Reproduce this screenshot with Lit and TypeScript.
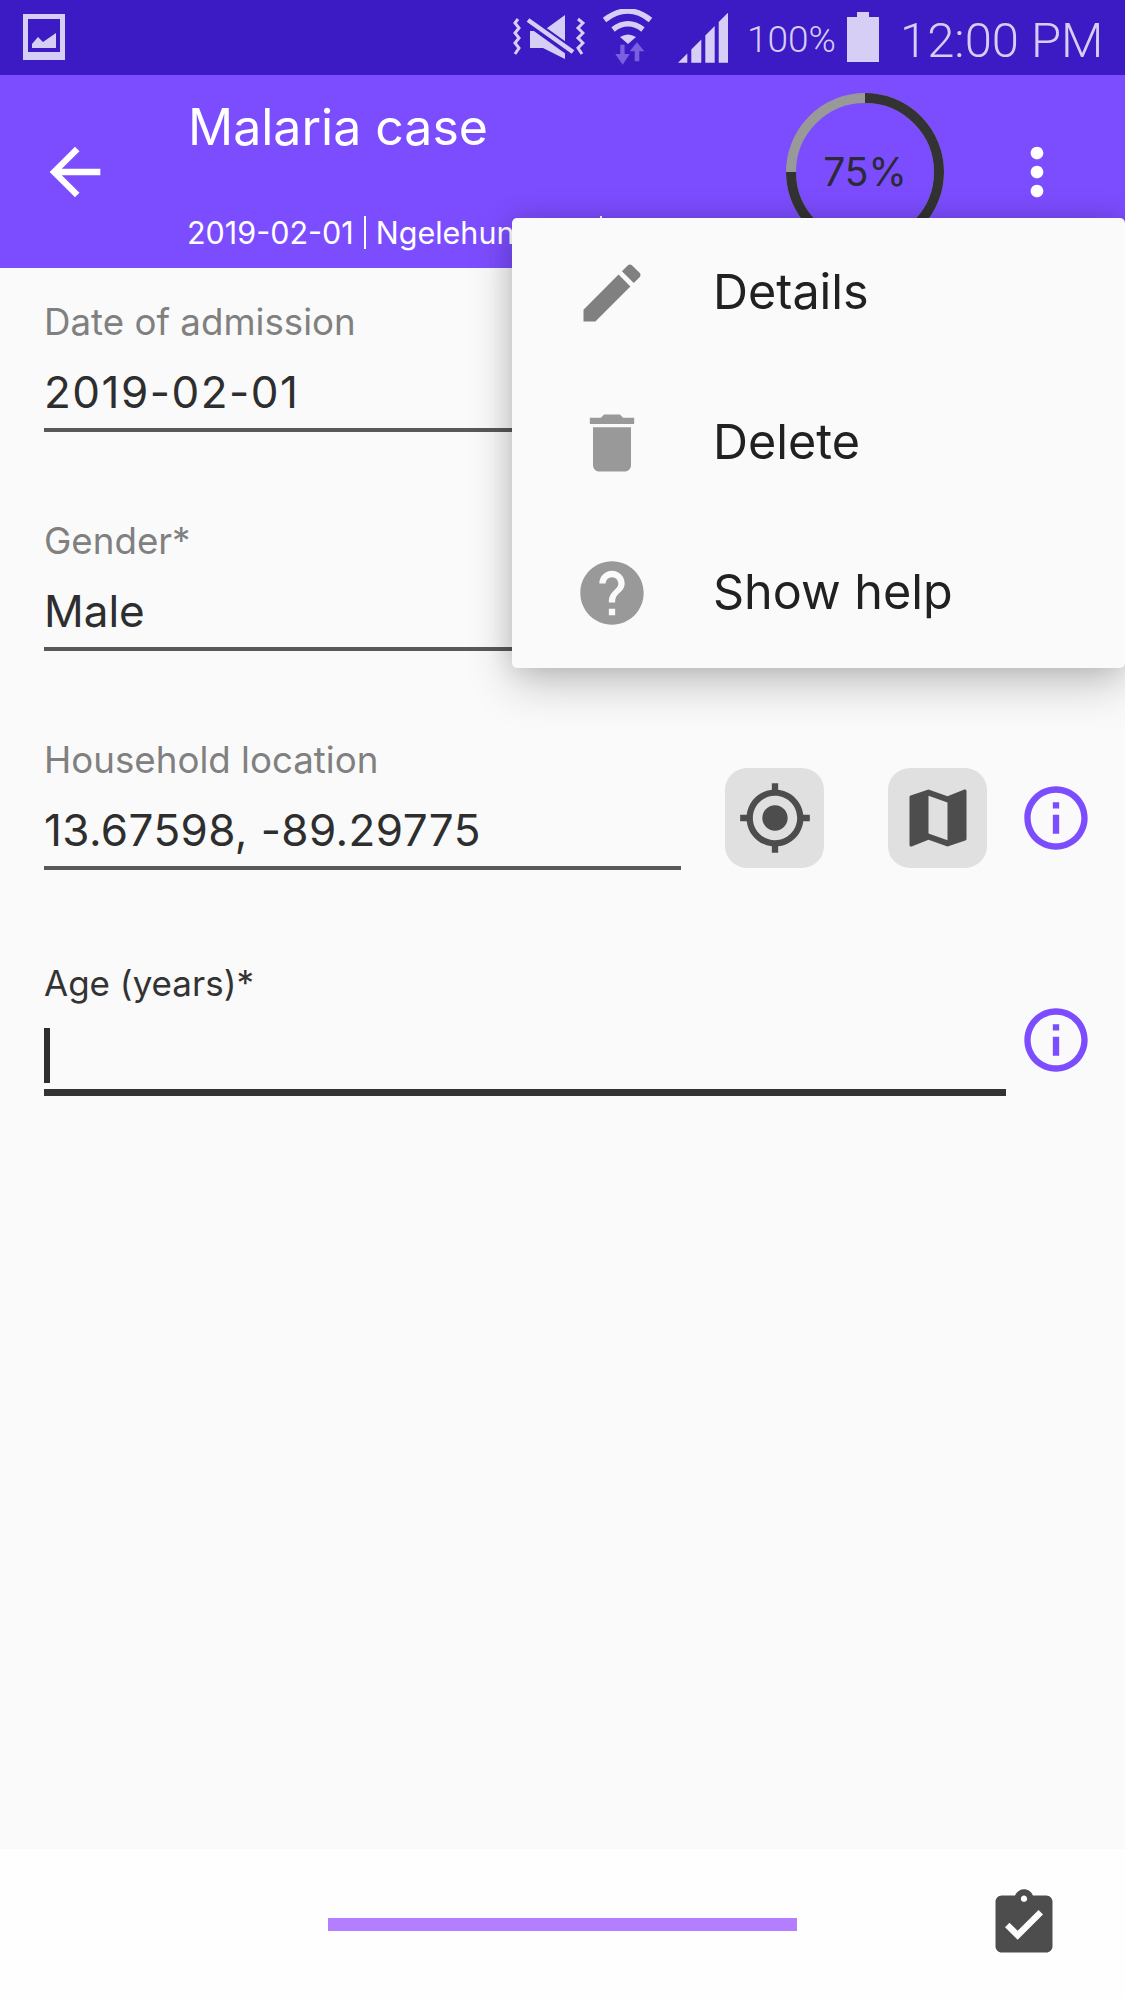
import { html, css, svg, LitElement } from 'lit';
import { customElement } from 'lit/decorators.js';

const ICONS = {
  back: 'M20 11H7.83l5.59-5.59L12 4l-8 8 8 8 1.41-1.41L7.83 13H20v-2z',
  more: 'M12 8c1.1 0 2-.9 2-2s-.9-2-2-2-2 .9-2 2 .9 2 2 2zm0 2c-1.1 0-2 .9-2 2s.9 2 2 2 2-.9 2-2-.9-2-2-2zm0 6c-1.1 0-2 .9-2 2s.9 2 2 2 2-.9 2-2-.9-2-2-2z',
  edit: 'M3 17.25V21h3.75L17.81 9.94l-3.75-3.75L3 17.25zM20.71 7.04c.39-.39.39-1.02 0-1.41l-2.34-2.34c-.39-.39-1.02-.39-1.41 0l-1.83 1.83 3.75 3.75 1.83-1.83z',
  trash: 'M6 19c0 1.1.9 2 2 2h8c1.1 0 2-.9 2-2V7H6v12zM19 4h-3.5l-1-1h-5l-1 1H5v2h14V4z',
  help: 'M12 2C6.48 2 2 6.48 2 12s4.48 10 10 10 10-4.48 10-10S17.52 2 12 2zm1 17h-2v-2h2v2zm2.07-7.75l-.9.92C13.45 12.9 13 13.5 13 15h-2v-.5c0-1.1.45-2.1 1.17-2.83l1.24-1.26c.37-.36.59-.86.59-1.41 0-1.1-.9-2-2-2s-2 .9-2 2H8c0-2.21 1.79-4 4-4s4 1.79 4 4c0 .88-.36 1.68-.93 2.25z',
  gps: 'M12 8c-2.21 0-4 1.79-4 4s1.79 4 4 4 4-1.79 4-4-1.79-4-4-4zm8.94 3c-.46-4.17-3.77-7.48-7.94-7.94V1h-2v2.06C6.83 3.52 3.52 6.83 3.06 11H1v2h2.06c.46 4.17 3.77 7.48 7.94 7.94V23h2v-2.06c4.17-.46 7.48-3.77 7.94-7.94H23v-2h-2.06zM12 19c-3.87 0-7-3.13-7-7s3.13-7 7-7 7 3.13 7 7-3.13 7-7 7z',
  map: 'M20.5 3l-.16.03L15 5.1 9 3 3.36 4.9c-.21.07-.36.25-.36.48V20.5c0 .28.22.5.5.5l.16-.03L9 18.9l6 2.1 5.64-1.9c.21-.07.36-.25.36-.48V3.5c0-.28-.22-.5-.5-.5zM15 19l-6-2.11V5l6 2.11V19z',
  info: 'M11 17h2v-6h-2v6zm1-15C6.48 2 2 6.48 2 12s4.48 10 10 10 10-4.48 10-10S17.52 2 12 2zm0 18c-4.41 0-8-3.59-8-8s3.59-8 8-8 8 3.59 8 8-3.59 8-8 8zM11 9h2V7h-2v2z',
  complete: 'M19 3h-4.18C14.4 1.84 13.3 1 12 1c-1.3 0-2.4.84-2.82 2H5c-1.1 0-2 .9-2 2v14c0 1.1.9 2 2 2h14c1.1 0 2-.9 2-2V5c0-1.1-.9-2-2-2zm-7 0c.55 0 1 .45 1 1s-.45 1-1 1-1-.45-1-1 .45-1 1-1zm-2 14l-4-4 1.41-1.41L10 14.17l6.59-6.59L18 9l-8 8z',
};

const icon = (name: keyof typeof ICONS, cls = '') =>
  html`<svg class="icon ${cls}" viewBox="0 0 24 24"><path d=${ICONS[name]}></path></svg>`;

const signalBars = [
  [0, 9.3],
  [13.3, 23.3],
  [27.3, 36.7],
  [40.7, 50],
];

@customElement('app-root')
export class AppRoot extends LitElement {
  static styles = css`
    :host {
      display: flex;
      flex-direction: column;
      position: relative;
      width: 1125px;
      height: 1999px;
      overflow: hidden;
      background: #fafafa;
      font-family: Inter, Roboto, sans-serif;
      color: #2e2e2e;
    }
    .icon {
      display: block;
      flex: none;
      width: 76px;
      height: 76px;
      fill: currentColor;
    }

    .status {
      display: flex;
      align-items: flex-start;
      flex: none;
      height: 75px;
      background: #3d1bc4;
      color: #d6cef5;
      font-family: Roboto, sans-serif;
    }
    .status svg {
      display: block;
      flex: none;
      fill: currentColor;
    }
    .s-image {
      margin: 14px 0 0 23px;
    }
    .s-mute {
      margin: 13px 0 0 448px;
    }
    .s-wifi {
      margin: 9px 0 0 17px;
    }
    .s-signal {
      margin: 13px 0 0 25px;
    }
    .s-pct {
      width: 100px;
      margin: 21px 0 0 19px;
      font-size: 37px;
      font-weight: 300;
      line-height: 37px;
    }
    .s-battery {
      margin-top: 12px;
    }
    .s-time {
      margin: 16px 0 0 21px;
      font-size: 49px;
      font-weight: 300;
      line-height: 49px;
      white-space: nowrap;
    }

    .bar {
      display: flex;
      align-items: center;
      flex: none;
      height: 193px;
      padding: 0 50px 0 37px;
      box-sizing: border-box;
      background: #7c4dff;
      color: #fff;
    }
    .titles {
      flex: 1;
      align-self: stretch;
      min-width: 0;
      margin-left: 74px;
      padding-top: 22px;
      white-space: nowrap;
    }
    .title {
      margin-left: 1px;
      font-size: 50px;
      line-height: 60px;
    }
    .sub {
      display: flex;
      margin-top: 56px;
      font-size: 30.5px;
      line-height: 40px;
    }
    .sub i {
      width: 2px;
      height: 33px;
      margin: 3px 10px 0;
      background: #fff;
    }
    .ring {
      display: grid;
      place-items: center;
      flex: none;
      width: 158px;
      height: 158px;
      margin-right: 55px;
      color: #2b2a36;
      font-size: 39px;
    }
    .ring > * {
      grid-area: 1 / 1;
    }

    .form {
      flex: 1;
      padding-top: 32px;
    }
    .row {
      display: flex;
      padding: 0 31px 0 44px;
      margin-bottom: 87px;
    }
    .field {
      flex: 1;
      min-width: 0;
    }
    .label {
      height: 44px;
      color: #808080;
      font-size: 36.7px;
      line-height: 43px;
    }
    .value {
      height: 56px;
      margin-top: 21px;
      font-size: 44px;
      line-height: 54px;
      padding-bottom: 7px;
      border-bottom: 4px solid #595959;
    }
    .date {
      letter-spacing: 1.5px;
    }
    .coords {
      letter-spacing: 0.4px;
    }
    .actions {
      display: flex;
      align-items: center;
      align-self: flex-end;
      flex: none;
      height: 100px;
      margin: 0 0 2px 44px;
    }
    .btn {
      display: flex;
      align-items: center;
      justify-content: center;
      width: 99px;
      height: 100px;
      margin-right: 64px;
      border-radius: 22px;
      background: #e0e0e0;
      color: #4d4d4d;
    }
    .btn + .btn {
      margin-right: 31px;
    }
    .purple {
      color: #7c4dff;
    }
    .focused {
      padding-top: 5px;
      margin-bottom: 0;
    }
    .focused .label {
      color: #333;
      font-size: 35px;
    }
    .input {
      height: 61px;
      margin-top: 22px;
      border-bottom: 7px solid #333;
    }
    .caret {
      width: 6px;
      height: 55px;
      background: #2e2e2e;
    }
    .focused .purple {
      align-self: flex-end;
      margin: 0 0 18px 12px;
    }

    .footer {
      display: flex;
      align-items: center;
      flex: none;
      height: 150px;
      padding: 0 63px 0 328px;
      background: #fefefe;
      color: #4d4d4d;
    }
    .progress {
      width: 469px;
      height: 13px;
      margin-right: auto;
      background: #b37eff;
    }

    .menu {
      position: absolute;
      top: 218px;
      right: 0;
      width: 613px;
      border-radius: 5px;
      background: #fafafa;
      box-shadow: 0 16px 46px rgba(0, 0, 0, 0.22), 0 0 26px rgba(0, 0, 0, 0.12);
    }
    .item {
      display: flex;
      align-items: center;
      gap: 63px;
      height: 150px;
      padding-left: 62px;
      color: #212121;
      font-size: 48.5px;
    }
    .item span {
      margin-bottom: 4px;
    }
    .item .icon {
      color: #999;
    }
    .item .dark {
      color: #808080;
    }
  `;

  private renderStatus() {
    return html`<div class="status">
      <svg class="s-image" width="42" height="46" viewBox="0 0 42 46">
        <path fill-rule="evenodd" d="M0 0H42V46H0ZM5 5V38H37V5Z"></path>
        <path d="M9 34V30L15 23L20 28L33 19V34Z"></path>
      </svg>
      <svg class="s-mute" width="72" height="47" viewBox="0 0 72 47">
        <g fill="none" stroke="currentColor" stroke-width="3">
          <path d="M5 6L2 10L6 15L2 20L6 25L2 30L6 35L2 41"></path>
          <path d="M65 6L70 10L65 15L70 20L65 25L70 30L65 35L69 41"></path>
        </g>
        <path d="M17 18H30L52 2V46L30 35H17Z"></path>
        <path d="M14 7L60 40" stroke="#3d1bc4" stroke-width="10"></path>
        <path d="M15 7L60 39" stroke="currentColor" stroke-width="4.5"></path>
      </svg>
      <svg class="s-wifi" width="51" height="56" viewBox="0 0 51 56">
        <g fill="none" stroke="currentColor" stroke-width="5.5">
          <path d="M2.500 11Q26 -7 48.500 11"></path>
          <path d="M11 20.500Q26 9 41 20.500"></path>
        </g>
        <path d="M18 28Q26 23 34 28L26 35Z"></path>
        <g fill="#7a5fe0">
          <path d="M18.300 35.700H22.600V45H27.700L20.700 55.700L13.300 45H18.300Z"></path>
          <path d="M35 33.300L42.300 42.300H37.300V52.300H32.700V42.300H27.700Z"></path>
        </g>
      </svg>
      <svg class="s-signal" width="50" height="50" viewBox="0 0 50 50">
        ${signalBars.map(
          ([a, b]) =>
            svg`<polygon points="${a},${49.7 - a} ${b},${49.7 - b} ${b},49.7 ${a},49.7"></polygon>`
        )}
      </svg>
      <div class="s-pct">100%</div>
      <svg class="s-battery" width="32" height="50" viewBox="0 0 32 50" fill="#dbd5f7">
        <path d="M10 0H22V5H32V50H0V5H10Z"></path>
      </svg>
      <div class="s-time">12:00 PM</div>
    </div>`;
  }

  private renderBar() {
    return html`<div class="bar">
      ${icon('back')}
      <div class="titles">
        <div class="title">Malaria case</div>
        <div class="sub">
          <span>2019-02-01</span><i></i><span>Ngelehun CHC</span><i></i>
        </div>
      </div>
      <div class="ring">
        <svg width="158" height="158" viewBox="0 0 158 158" fill="none" stroke-width="10">
          <circle cx="79" cy="79" r="74" stroke="#999"></circle>
          <circle
            cx="79"
            cy="79"
            r="74"
            stroke="#333"
            pathLength="100"
            stroke-dasharray="75 25"
            transform="rotate(-90 79 79)"
          ></circle>
        </svg>
        <span>75%</span>
      </div>
      ${icon('more')}
    </div>`;
  }

  private renderField(label: string, value: string, cls = '') {
    return html`<div class="field">
      <div class="label">${label}</div>
      <div class="value ${cls}">${value}</div>
    </div>`;
  }

  private renderMenu() {
    return html`<div class="menu">
      <div class="item">${icon('edit', 'dark')}<span>Details</span></div>
      <div class="item">${icon('trash')}<span>Delete</span></div>
      <div class="item">${icon('help')}<span>Show help</span></div>
    </div>`;
  }

  protected render() {
    return html`
      ${this.renderStatus()} ${this.renderBar()}
      <div class="form">
        <div class="row">${this.renderField('Date of admission', '2019-02-01', 'date')}</div>
        <div class="row">${this.renderField('Gender*', 'Male')}</div>
        <div class="row">
          ${this.renderField('Household location', '13.67598, -89.29775', 'coords')}
          <div class="actions">
            <div class="btn">${icon('gps')}</div>
            <div class="btn">${icon('map')}</div>
            ${icon('info', 'purple')}
          </div>
        </div>
        <div class="row focused">
          <div class="field">
            <div class="label">Age (years)*</div>
            <div class="input"><div class="caret"></div></div>
          </div>
          ${icon('info', 'purple')}
        </div>
      </div>
      <div class="footer">
        <div class="progress"></div>
        ${icon('complete')}
      </div>
      ${this.renderMenu()}
    `;
  }
}
